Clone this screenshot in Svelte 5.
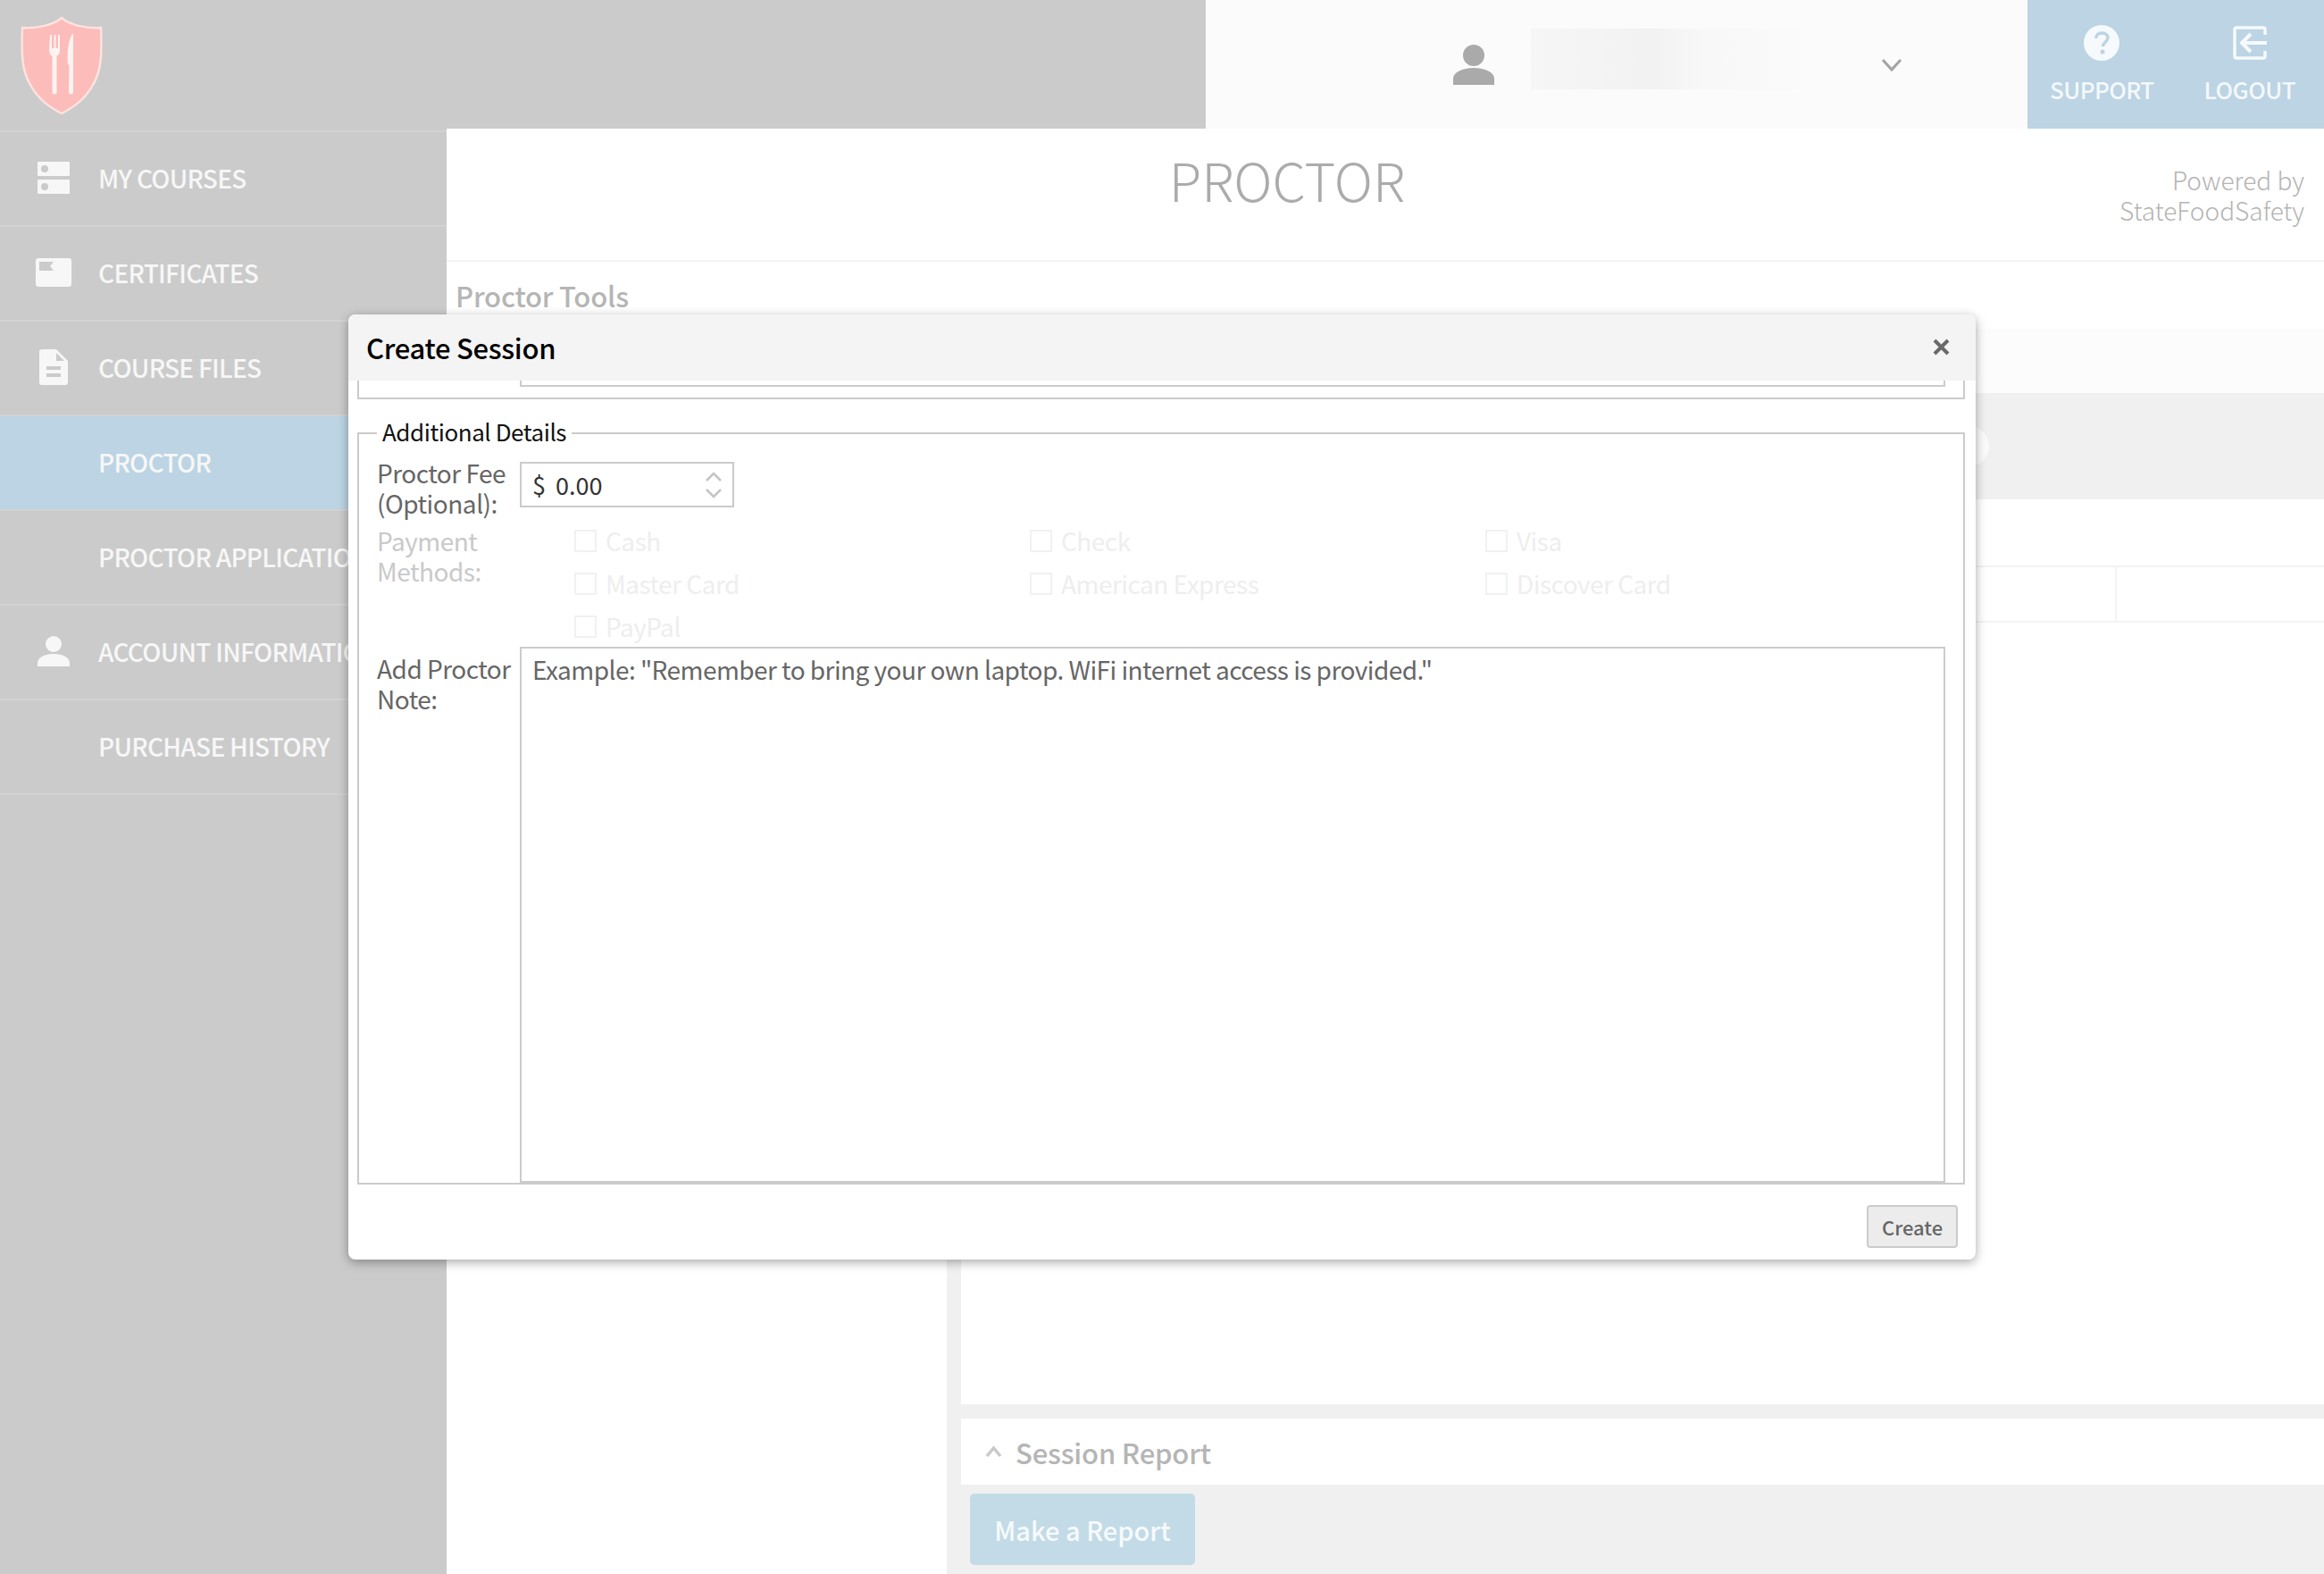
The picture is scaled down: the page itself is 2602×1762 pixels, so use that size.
<script>
  const navItems = [
    { label: 'MY COURSES', icon: 'courses' },
    { label: 'CERTIFICATES', icon: 'certificate' },
    { label: 'COURSE FILES', icon: 'file' },
    { label: 'PROCTOR', active: true },
    { label: 'PROCTOR APPLICATION' },
    { label: 'ACCOUNT INFORMATION', icon: 'person' },
    { label: 'PURCHASE HISTORY' }
  ];

  const paymentMethods = ['Cash', 'Check', 'Visa', 'Master Card', 'American Express', 'Discover Card', 'PayPal'];
</script>

<div class="page">
  <header class="topbar">
    <div class="brand">
      <svg class="logo" viewBox="0 0 138 144" width="138" height="144">
        <path d="M69 20C60 28 42 32 25 31C24 60 24 78 34 95C42 110 55 120 69 127C83 120 96 110 104 95C114 78 114 60 113 31C96 32 78 28 69 20Z" fill="#fbbcba" stroke="#fde3e0" stroke-width="2.5" />
        <path d="M56 39h2v15h2.500v-15h2v15h2.500v-15h2v17c0 4-2 6-3.500 7v41q-2.500 3-5 0v-41c-1.500-1-3.500-3-3.500-7Z" fill="#fff3f1" />
        <path d="M81 38C76 46 75 60 76 72L77.500 73L77 104q2.500 3 5 0L82 38Z" fill="#fff3f1" />
      </svg>
    </div>
    <div class="user">
      <svg class="user-icon" viewBox="0 0 46 46" width="46" height="46">
        <circle cx="23" cy="13" r="12" fill="#aaa" />
        <path d="M0 46V39C0 32 10 27 23 27S46 32 46 39V46Z" fill="#aaa" />
      </svg>
      <div class="user-name"></div>
      <svg class="user-caret" viewBox="0 0 24 16" width="24" height="16">
        <path d="M2 2L12 13L22 2" fill="none" stroke="#a3a3a3" stroke-width="3" />
      </svg>
    </div>
    <div class="actions">
      <div class="action">
        <svg viewBox="0 0 40 40" width="40" height="40">
          <circle cx="20" cy="20" r="20" fill="#f6fafc" />
          <path d="M13.500 15C14 11 17 9 20.500 9C24.500 9 27 11.500 27 14.500C27 19 21.500 19 21.500 24" fill="none" stroke="#bcd4e3" stroke-width="3.500" />
          <circle cx="21" cy="30" r="2.500" fill="#bcd4e3" />
        </svg>
        <span>SUPPORT</span>
      </div>
      <div class="action">
        <svg viewBox="0 -1 38 40" width="38" height="40">
          <path d="M36 10V4Q36 2 34 2H4Q2 2 2 4V34Q2 36 4 36H34Q36 36 36 34V28" fill="none" stroke="#f6fafc" stroke-width="3.500" />
          <path d="M38 19H13M20 9L10 19L20 29" fill="none" stroke="#f6fafc" stroke-width="4" />
        </svg>
        <span>LOGOUT</span>
      </div>
    </div>
  </header>

  <div class="layout">
    <nav class="sidebar">
      {#each navItems as item}
        <div class="nav-item" class:active={item.active}>
          <span class="nav-icon">
            {#if item.icon === 'courses'}
              <svg viewBox="0 0 36 36" width="36" height="36">
                <path fill-rule="evenodd" d="M1 0H35Q36 0 36 1V15Q36 16 35 16H1Q0 16 0 15V1Q0 0 1 0ZM8 4A4 4 0 1 0 8 12A4 4 0 1 0 8 4ZM1 20H35Q36 20 36 21V35Q36 36 35 36H1Q0 36 0 35V21Q0 20 1 20ZM8 24A4 4 0 1 0 8 32A4 4 0 1 0 8 24Z" fill="#f7f7f7" />
              </svg>
            {:else if item.icon === 'certificate'}
              <svg viewBox="0 0 40 32" width="40" height="32">
                <path fill-rule="evenodd" d="M3 0H37Q40 0 40 3V29Q40 32 37 32H3Q0 32 0 29V3Q0 0 3 0ZM4 4V14H20L16 9L20 4Z" fill="#f7f7f7" />
              </svg>
            {:else if item.icon === 'file'}
              <svg viewBox="0 0 32 40" width="32" height="40">
                <path fill-rule="evenodd" d="M3 0H19L32 13V37Q32 40 29 40H3Q0 40 0 37V3Q0 0 3 0ZM19 4V13H28ZM8 19V23H24V19ZM8 27V31H24V27Z" fill="#f7f7f7" />
              </svg>
            {:else if item.icon === 'person'}
              <svg viewBox="0 0 36 34" width="36" height="34">
                <circle cx="18" cy="9" r="9" fill="#f7f7f7" />
                <path d="M0 34V30C0 24 8 20 18 20S36 24 36 30V34Z" fill="#f7f7f7" />
              </svg>
            {/if}
          </span>
          <span class="nav-label">{item.label}</span>
        </div>
      {/each}
    </nav>

    <main class="content">
      <div class="page-head">
        <h1>PROCTOR</h1>
        <p>Powered by<br />StateFoodSafety</p>
      </div>
      <h2 class="tools-title">Proctor Tools</h2>
      <div class="band-light"></div>
      <div class="band-gray"><span class="band-dot"></span></div>
      <div class="band-spacer"></div>
      <div class="tab-row"><span class="tab-cell"></span></div>
      <div class="columns">
        <div class="col-left"></div>
        <div class="col-right">
          <div class="panel-main"></div>
          <div class="panel-report">
            <svg viewBox="0 0 19 14" width="19" height="14">
              <path d="M2 12L9.500 3L17 12" fill="none" stroke="#c9c9c9" stroke-width="3.500" />
            </svg>
            <span>Session Report</span>
          </div>
          <button class="report-btn" type="button">Make a Report</button>
        </div>
      </div>
    </main>
  </div>

  <div class="modal">
    <div class="modal-head">
      <span class="modal-title">Create Session</span>
      <svg viewBox="0 0 19 19" width="19" height="19">
        <path d="M2 2L17 17M17 2L2 17" stroke="#696969" stroke-width="4" />
      </svg>
    </div>
    <div class="modal-body">
      <div class="cut-fieldset"><div class="cut-input"></div></div>
      <fieldset class="details">
        <legend>Additional Details</legend>
        <div class="row fee-row">
          <span class="row-label">Proctor Fee (Optional):</span>
          <div class="fee-input">
            <span class="dollar">$</span>
            <span class="fee-value">0.00</span>
            <svg viewBox="0 0 20 32" width="20" height="32">
              <path d="M2 11L10 3L18 11M2 21L10 29L18 21" fill="none" stroke="#c4c4c4" stroke-width="2.500" />
            </svg>
          </div>
        </div>
        <div class="row pay-row">
          <span class="row-label muted">Payment Methods:</span>
          <div class="pay-grid">
            {#each paymentMethods as method}
              <div class="pay-option"><span class="box"></span>{method}</div>
            {/each}
          </div>
        </div>
        <div class="row note-row">
          <span class="row-label note-label">Add Proctor Note:</span>
          <textarea placeholder={'Example: "Remember to bring your own laptop. WiFi internet access is provided."'}></textarea>
        </div>
      </fieldset>
    </div>
    <div class="modal-foot">
      <button class="create-btn" type="button">Create</button>
    </div>
  </div>
</div>

<style>
  :global(body) {
    margin: 0;
    background: #fff;
  }

  .page {
    position: relative;
    width: 2602px;
    height: 1762px;
    overflow: hidden;
    font-family: "Noto Sans CJK JP", "Noto Sans", sans-serif;
    color: #666;
  }

  .topbar {
    display: flex;
    height: 144px;
  }

  .brand {
    width: 1350px;
    background: #cbcbcb;
  }

  .logo {
    display: block;
  }

  .user {
    width: 920px;
    background: #fbfbfb;
    display: flex;
    align-items: center;
    padding-left: 277px;
    box-sizing: border-box;
  }

  .user-name {
    width: 302px;
    height: 68px;
    margin: 0 0 12px 41px;
    background: linear-gradient(90deg, #f6f6f6, #f2f2f2 45%, #f8f8f8 65%, #fafafa);
  }

  .user-caret {
    margin-left: 90px;
    margin-top: 2px;
  }

  .actions {
    flex: 1;
    background: #bcd4e3;
    display: flex;
    padding: 28px 32px 0 25px;
    justify-content: space-between;
  }

  .action {
    display: flex;
    flex-direction: column;
    align-items: center;
    gap: 16px;
    color: #f4f8fb;
    font-size: 26px;
    letter-spacing: -0.6px;
    font-weight: 500;
    line-height: 32px;
  }

  .layout {
    display: flex;
    height: 1618px;
  }

  .sidebar {
    width: 500px;
    background: #cbcbcb;
    padding-top: 2px;
    box-sizing: border-box;
  }

  .nav-item {
    height: 106px;
    box-sizing: border-box;
    display: flex;
    align-items: center;
    padding-bottom: 3px;
    border-top: 2px solid #d3d3d3;
    color: #f7f7f7;
    font-size: 28px;
    letter-spacing: -0.7px;
    font-weight: 500;
    white-space: nowrap;
  }

  .nav-item:last-child {
    height: 108px;
    border-bottom: 2px solid #d3d3d3;
  }

  .nav-item.active {
    background: #bcd4e3;
  }

  .nav-icon {
    width: 110px;
    display: flex;
    justify-content: center;
    padding-left: 10px;
    box-sizing: border-box;
    flex: none;
  }

  .content {
    flex: 1;
    min-width: 0;
    display: flex;
    flex-direction: column;
  }

  .page-head {
    height: 149px;
    box-sizing: border-box;
    display: flex;
    border-bottom: 2px solid #f3f3f3;
    padding-right: 22px;
  }

  .page-head h1 {
    flex: 1;
    margin: 0;
    text-align: center;
    font-size: 59.5px;
    font-weight: 300;
    line-height: 113px;
    color: #ababab;
  }

  .page-head p {
    width: 216px;
    flex: none;
    margin: 0 0 0 -18px;
    padding-top: 40px;
    text-align: right;
    font-size: 28px;
    font-weight: 300;
    line-height: 34px;
    color: #b4b4b4;
  }

  .tools-title {
    margin: 0;
    height: 75px;
    padding: 16px 0 0 10px;
    box-sizing: border-box;
    font-size: 31px;
    letter-spacing: -0.2px;
    font-weight: 500;
    line-height: 44px;
    color: #b5b5b5;
  }

  .band-light {
    height: 72px;
    background: #fcfcfc;
  }

  .band-gray {
    height: 119px;
    background: #f0f0f0;
    position: relative;
  }

  .band-dot {
    position: absolute;
    left: 1683px;
    top: 37px;
    width: 44px;
    height: 45px;
    border-radius: 50%;
    background: #fafafa;
  }

  .band-spacer {
    height: 74px;
  }

  .tab-row {
    height: 64px;
    box-sizing: border-box;
    border-top: 2px solid #f3f3f3;
    border-bottom: 2px solid #f3f3f3;
    display: flex;
    justify-content: flex-end;
  }

  .tab-cell {
    width: 232px;
    border-left: 2px solid #f3f3f3;
  }

  .columns {
    flex: 1;
    display: flex;
    min-height: 0;
  }

  .col-left {
    width: 560px;
    background: #fff;
  }

  .col-right {
    flex: 1;
    background: #f0f0f0;
    padding-left: 16px;
    display: flex;
    flex-direction: column;
  }

  .panel-main {
    height: 875px;
    background: #fff;
  }

  .panel-report {
    height: 74px;
    margin-top: 16px;
    background: #fff;
    display: flex;
    align-items: center;
    gap: 15px;
    padding-left: 27px;
    font-size: 31px;
    letter-spacing: -0.2px;
    font-weight: 500;
    color: #b5b5b5;
  }

  .report-btn {
    align-self: flex-start;
    width: 252px;
    height: 80px;
    margin: 10px 0 0 10px;
    padding: 0;
    border: 0;
    border-radius: 5px;
    background: #c3dbe7;
    color: #f6fafc;
    font: 500 29px "Noto Sans CJK JP", "Noto Sans", sans-serif;
  }

  /* dialog sits over the dimmed page */
  .modal {
    position: absolute;
    left: 390px;
    top: 352px;
    width: 1822px;
    height: 1058px;
    background: #fff;
    border-radius: 8px;
    box-shadow: 0 3px 12px rgba(0, 0, 0, 0.35);
    overflow: hidden;
    display: flex;
    flex-direction: column;
  }

  .modal-head {
    height: 74px;
    flex: none;
    background: #f4f4f4;
    display: flex;
    align-items: center;
    justify-content: space-between;
    padding: 0 29px 0 20px;
  }

  .modal-head svg {
    margin-top: -2px;
  }

  .modal-title {
    font-size: 31px;
    letter-spacing: -0.3px;
    font-weight: 500;
    color: #000;
    margin-top: -1px;
  }

  .modal-body {
    padding: 0 12px 0 10px;
  }

  .cut-fieldset {
    height: 21px;
    box-sizing: border-box;
    border: 2px solid #cbcbcb;
    border-top: 0;
  }

  .cut-input {
    width: 1596px;
    height: 7px;
    box-sizing: border-box;
    margin-left: 180px;
    border: 2px solid #cbcbcb;
    border-top: 0;
  }

  .details {
    margin: 18px 0 0;
    padding: 7px 0 0 20px;
    border: 2px solid #cbcbcb;
    min-width: 0;
  }

  .details legend {
    margin-left: 0;
    padding: 0 6px 4px;
    font-size: 26px;
    letter-spacing: -0.45px;
    line-height: 36px;
    color: #111;
  }

  .row {
    display: flex;
    align-items: flex-start;
    font-size: 28px;
    letter-spacing: -0.5px;
    line-height: 34px;
  }

  .row-label {
    width: 160px;
    flex: none;
    color: #666;
  }

  .row-label.muted {
    color: #c9c9c9;
  }

  .fee-row {
    height: 68px;
    margin-bottom: 8px;
  }

  .fee-input {
    width: 240px;
    height: 51px;
    margin-top: 5px;
    box-sizing: border-box;
    border: 2px solid #cbcbcb;
    display: flex;
    align-items: center;
    padding: 0 11px 0 12px;
    font-size: 27px;
    letter-spacing: 0;
    color: #333;
  }

  .dollar {
    width: 26px;
    flex: none;
  }

  .fee-value {
    flex: 1;
  }

  .pay-row {
    margin-bottom: 6px;
  }

  .pay-grid {
    margin-left: 61px;
    display: grid;
    grid-template-columns: repeat(3, 510px);
    row-gap: 14px;
  }

  .pay-option {
    display: flex;
    align-items: center;
    gap: 10px;
    color: #eee;
  }

  .box {
    width: 25px;
    height: 25px;
    box-sizing: border-box;
    border: 2px solid #f1f1f1;
  }

  .note-label {
    padding-top: 7px;
  }

  textarea {
    width: 1596px;
    height: 600px;
    margin: 0;
    padding: 6px 12px;
    box-sizing: border-box;
    border: 2px solid #cbcbcb;
    border-radius: 0;
    resize: none;
    outline: none;
    display: block;
    font: 28px/34px "Noto Sans CJK JP", "Noto Sans", sans-serif;
    letter-spacing: -0.54px;
  }

  textarea::placeholder {
    color: #666;
    opacity: 1;
  }

  .modal-foot {
    display: flex;
    justify-content: flex-end;
    padding: 23px 20px 0 0;
  }

  .create-btn {
    width: 102px;
    height: 48px;
    padding: 0;
    box-sizing: border-box;
    border: 2px solid #cbcbcb;
    border-radius: 4px;
    background: #ececec;
    color: #666;
    font: 500 22px "Noto Sans CJK JP", "Noto Sans", sans-serif;
  }
</style>
